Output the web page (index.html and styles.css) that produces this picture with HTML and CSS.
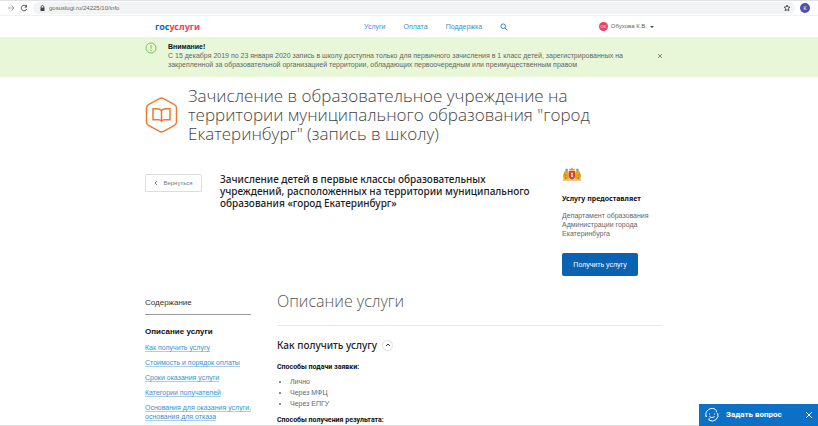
FILE: index.html
```html
<!DOCTYPE html>
<html lang="ru">
<head>
<meta charset="utf-8">
<meta name="viewport" content="width=device-width, initial-scale=1">
<title>Запись в школу</title>
<link rel="stylesheet" href="styles.css">
</head>
<body>
<div class="browser">
  <button class="tool forward" aria-label="Вперёд"><svg width="8" height="8" viewBox="0 0 8 8"><path d="M1 4h6M4.500 1.500 7 4 4.500 6.500"/></svg></button>
  <button class="tool" aria-label="Обновить"><svg width="8" height="8" viewBox="0 0 8 8"><path d="M6.700 5A2.800 2.800 0 1 1 6.200 2.200"/><path class="solid" d="M7 .6v2.800H4.200z"/></svg></button>
  <div class="address">
    <svg width="5" height="6" viewBox="0 0 5 6"><path d="M1.200 3V1.800a1.300 1.300 0 0 1 2.600 0V3" fill="none" stroke="#444" stroke-width=".8"/><path d="M.5 2.600h4V6h-4z" fill="#444"/></svg>
    <input class="url" aria-label="Адрес" value="gosuslugi.ru/24225/10/info">
    <button class="tool" aria-label="В закладки"><svg width="8" height="8" viewBox="0 0 8 8"><path d="m4 1 .9 2 2.100.2-1.600 1.400.5 2.200L4 5.700 2.100 6.800l.5-2.200L1 3.200 3.100 3z"/></svg></button>
  </div>
  <span class="profile">К</span>
</div>

<header class="header wrap">
  <a class="logo" href="#"><span>гос</span>услуги</a>
  <nav class="nav">
    <a href="#">Услуги</a>
    <a href="#">Оплата</a>
    <a href="#">Поддержка</a>
    <button class="search" aria-label="Поиск"><svg width="8" height="8" viewBox="0 0 8 8"><circle cx="3.200" cy="3.200" r="2.300"/><path d="m5 5 2.300 2.300"/></svg></button>
  </nav>
  <button class="user"><span class="avatar">ОК</span><span>Обухова К.В.</span><span class="caret"></span></button>
</header>

<section class="alert">
  <div class="wrap alert-inner">
    <svg width="12" height="12" viewBox="0 0 12 12" class="alert-icon"><circle cx="6" cy="6" r="5"/><path d="M6 3v3.700M6 7.800v1.200"/></svg>
    <div class="alert-text">
      <strong>Внимание!</strong>
      <p>С 15 декабря 2019 по 23 января 2020 запись в школу доступна только для первичного зачисления в 1 класс детей, зарегистрированных на<br>закрепленной за образовательной организацией территории, обладающих первоочередным или преимущественным правом</p>
    </div>
    <button class="alert-close" aria-label="Закрыть"><svg width="6" height="6" viewBox="0 0 6 6"><path d="m1 1 4 4M5 1 1 5"/></svg></button>
  </div>
</section>

<main class="wrap">
  <div class="title-row">
    <svg width="33" height="36" viewBox="0 0 33 36" class="title-icon"><path d="M14.500 1.600q2-1 4 0l11 6q2 1.100 2 3.400v14q0 2.300-2 3.400l-11 6q-2 1-4 0l-11-6q-2-1.100-2-3.400V11q0-2.300 2-3.400z"/><path d="M16.500 13.500q-1.500-1.800-4-1.800H8v11h5.500q2 0 3 1.500 1-1.500 3-1.500H25v-11h-4.500q-2.500 0-4 1.800zV24"/></svg>
    <h1>Зачисление в образовательное учреждение на<br>территории муниципального образования "город<br>Екатеринбург" (запись в школу)</h1>
  </div>

  <div class="intro">
    <button class="back"><svg width="4" height="6" viewBox="0 0 4 6"><path d="M3 1 1 3l2 2"/></svg>Вернуться</button>
    <h2 class="subtitle">Зачисление детей в первые классы образовательных<br>учреждений, расположенных на территории муниципального<br>образования «город Екатеринбург»</h2>
    <aside class="provider">
      <svg width="20" height="14" viewBox="0 0 20 14">
        <path d="M1 12.500h18v1H1z" fill="#c89a22"/>
        <path d="M2 5l2-2 2 1 .8 3v5.500H2L1 9zM18 5l-2-2-2 1-.8 3v5.500H18L19 9z" fill="#dca91e"/>
        <path d="M2 7.500l2 1M18 7.500l-2 1M3.500 10v2M16.500 10v2" stroke="#b58a1c" fill="none"/>
        <path d="M3 2.500l2-1 1 1.500-1 1zM17 2.500l-2-1-1 1.500 1 1z" fill="#4f9b8b"/>
        <path d="M6.800 4h6.400v6q0 1.500-3.200 2.500Q6.800 11.500 6.800 10z" fill="#dc3b36"/>
        <path d="M9 5.500l2 .5-.5 2 .8 2H9l.5-2z" fill="#fff"/>
        <path d="M7.500 3.500 7 1.500l1.700.7L10 .3l1.300 1.900 1.700-.7-.5 2z" fill="#d6922a"/>
      </svg>
      <h3>Услугу предоставляет</h3>
      <p>Департамент образования<br>Администрации города<br>Екатеринбурга</p>
      <button class="primary">Получить услугу</button>
    </aside>
  </div>

  <div class="details">
    <nav class="contents">
      <h3>Содержание</h3>
      <strong>Описание услуги</strong>
      <ul>
        <li><a href="#how">Как получить услугу</a></li>
        <li><a href="#">Стоимость и порядок оплаты</a></li>
        <li><a href="#">Сроки оказания услуги</a></li>
        <li><a href="#">Категории получателей</a></li>
        <li><a href="#">Основания для оказания услуги,<br>основания для отказа</a></li>
      </ul>
    </nav>
    <section class="description">
      <h2>Описание услуги</h2>
      <div class="how-head" id="how">
        <h3>Как получить услугу</h3>
        <button class="toggle" aria-label="Свернуть"><svg width="6" height="4" viewBox="0 0 6 4"><path d="m1 3 2-2 2 2"/></svg></button>
      </div>
      <h4>Способы подачи заявки:</h4>
      <ul>
        <li>Лично</li>
        <li>Через МФЦ</li>
        <li>Через ЕПГУ</li>
      </ul>
      <h4>Способы получения результата:</h4>
    </section>
  </div>
</main>

<div class="page-edge"></div>
<div class="chat">
  <button class="ask"><svg width="14" height="14" viewBox="0 0 14 14"><path d="M1.500 9A6 6 0 0 1 11.500 2.600M12.700 5A6 6 0 0 1 4 12.200M4 12.200l.2-2M1.500 9l-1-1.500M4.500 5.500v1M9.500 5.500v1M4.300 8.500q2.700 2.500 5.400 0M11.500 2.600l-.2 1.800"/></svg>Задать вопрос</button>
  <button class="chat-close" aria-label="Закрыть чат"><svg width="8" height="8" viewBox="0 0 8 8"><path d="m1 1 6 6M7 1 1 7"/></svg></button>
</div>
</body>
</html>
```
FILE: styles.css
```css
* { box-sizing: border-box; }
html { height: 100%; overflow: hidden; }
body {
  margin: 0;
  height: 100%;
  overflow: hidden;
  background: #fff;
  color: #666;
  font: 7px/9px "Liberation Sans", Arial, sans-serif;
}
h1, h2, h3, h4, p, ul { margin: 0; padding: 0; }
button { margin: 0; padding: 0; border: 0; background: none; font: inherit; color: inherit; }
a { color: #3d90cb; text-decoration: none; }
svg { display: block; flex: none; fill: none; stroke: currentColor; }
.wrap { margin: 0 155px 0 145px; }

.browser {
  display: flex;
  align-items: center;
  gap: 5px;
  height: 16px;
  padding: 0 8px 0 7px;
  border-top: 1px solid #dfe1e5;
  border-bottom: 1px solid #f0f0f0;
}
.tool { color: #555; }
.tool .solid { fill: #555; stroke: none; }
.forward { color: #aaa; }
.address {
  flex: 1;
  display: flex;
  align-items: center;
  gap: 4px;
  height: 12px;
  padding: 0 4px 0 7px;
  border-radius: 6px;
  background: #f1f3f4;
}
.address > svg { stroke: none; }
.url { flex: 1; padding: 0; border: 0; background: none; font: inherit; font-size: 6px; color: #666; }
.profile {
  width: 10px;
  height: 10px;
  border-radius: 50%;
  background: #4a51b5;
  color: #fff;
  font-size: 5px;
  line-height: 10px;
  text-align: center;
}

.header { display: flex; align-items: center; height: 21px; }
.logo { width: 219px; padding-left: 10px; color: #ee3f58; font: bold 9px/12px "Noto Sans", sans-serif; }
.logo span { color: #0d6cb8; }
.nav { display: flex; align-items: center; gap: 18px; }
.search { color: #2f86c6; }
.user { display: flex; align-items: center; gap: 3px; margin-left: auto; margin-right: 9px; font-size: 6px; }
.avatar {
  width: 9px;
  height: 9px;
  border-radius: 50%;
  background: #f0405f;
  color: #fff;
  font-size: 4px;
  line-height: 9px;
}
.caret { border: 2px solid transparent; border-top-color: #444; border-bottom: 0; }

.alert { background: #e7f7d7; }
.alert-inner { display: flex; height: 40px; padding-top: 5px; }
.alert-icon { margin-right: 11px; color: #7fc04c; }
.alert-text { flex: 1; white-space: nowrap; }
.alert-text strong { display: block; color: #111; }
.alert-close { align-self: flex-start; margin: 11px 0 0; color: #888; }

.title-row { display: flex; gap: 10px; padding-top: 9px; }
.title-icon { margin-top: 11px; color: #ee7a32; stroke-width: 1.500; }
h1 { color: #444; font: 300 17px/19px "Open Sans", sans-serif; white-space: nowrap; }

.intro { display: flex; align-items: flex-start; padding-top: 24px; }
.back {
  display: flex;
  align-items: center;
  justify-content: center;
  gap: 5px;
  width: 57px;
  height: 18px;
  margin: 7px 18px 0 0;
  border: 1px solid #ddd;
  border-radius: 1px;
  color: #777;
  font-size: 6px;
}
.subtitle { flex: 1; padding-top: 6px; color: #222; font: 500 10px/12px "Noto Sans", sans-serif; white-space: nowrap; }
.provider { width: 101px; }
.provider svg { stroke: none; }
.provider h3 { margin: 13px 0 7px; color: #111; font: bold 7px/10px "Noto Sans", sans-serif; white-space: nowrap; }
.provider p { margin-bottom: 15px; }
.primary { width: 76px; height: 23px; border-radius: 2px; background: #0b62b2; color: #fff; }

.details { display: flex; gap: 26px; padding-top: 15px; }
.contents { width: 106px; padding-top: 7px; }
.contents h3 { padding-bottom: 6px; border-bottom: 1px solid #999; color: #333; font-weight: normal; font-size: 8px; line-height: 10px; }
.contents strong { display: block; margin: 12px 0 6px; color: #111; font-size: 8px; line-height: 10px; }
.contents ul { display: grid; gap: 6px; list-style: none; white-space: nowrap; }
.contents a { border-bottom: 1px solid #a9cfe8; }
.description { flex: 1; }
.description h2 { padding-bottom: 14px; border-bottom: 1px solid #e8e8e8; color: #555; font: 300 16px/20px "Open Sans", sans-serif; }
.how-head { display: flex; align-items: center; gap: 5px; margin: 12px 0 11px; }
.how-head h3 { color: #222; font: 500 10px/14px "Noto Sans", sans-serif; }
.toggle { display: grid; place-items: center; width: 11px; height: 11px; border: 1px solid #ddd; border-radius: 50%; color: #333; }
h4 { color: #111; font: bold 7px/9px Roboto, sans-serif; }
.description ul { margin: 4px 0 7px; padding-left: 13px; line-height: 11px; }

.page-edge { position: fixed; right: 0; bottom: 0; left: 0; height: 1px; background: #d8d8d8; }
.chat {
  position: fixed;
  right: 0;
  bottom: 0;
  display: flex;
  align-items: center;
  justify-content: space-between;
  width: 119px;
  height: 22px;
  padding: 0 5px 0 6px;
  background: #0b70c6;
  color: #fff;
}
.ask { display: flex; align-items: center; gap: 7px; font: bold 8px/10px Roboto, sans-serif; }
```
